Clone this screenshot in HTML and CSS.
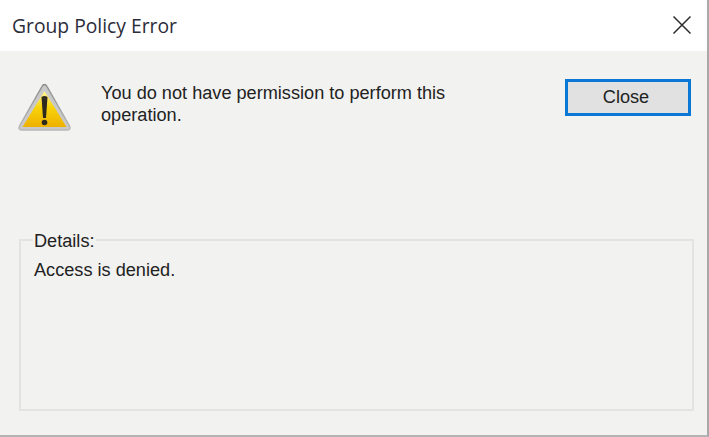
FILE: index.html
```html
<!DOCTYPE html>
<html lang="en">
<head>
<meta charset="utf-8">
<title>Group Policy Error</title>
<link rel="stylesheet" href="styles.css">
</head>
<body>
<div class="dialog">
  <header class="titlebar">
    <span class="title">Group Policy Error</span>
    <svg class="close-x" width="20" height="20" viewBox="0 0 20 20"><path d="M1.5 1.5 L18.5 18.5 M18.5 1.5 L1.5 18.5" stroke="#2b2b2b" stroke-width="1.5" fill="none"/></svg>
  </header>
  <main class="content">
    <section class="message-row">
      <svg class="warn" width="56" height="50" viewBox="0 0 56 50">
        <defs>
          <linearGradient id="y" x1="0" y1="0" x2="0" y2="1">
            <stop offset="0" stop-color="#fff3a0"/>
            <stop offset="0.45" stop-color="#f8d40a"/>
            <stop offset="1" stop-color="#eeb000"/>
          </linearGradient>
          <linearGradient id="r" x1="0" y1="0" x2="0" y2="1">
            <stop offset="0" stop-color="#8d8d8d"/>
            <stop offset="1" stop-color="#b8b8b8"/>
          </linearGradient>
        </defs>
        <path d="M27.5 1.5 Q29 1.5 30 3.5 L52.5 43 Q54 47 50.5 47 L4.5 47 Q1 47 2.5 43 L25 3.5 Q26 1.5 27.5 1.5Z" fill="#c9c9c9" stroke="url(#r)" stroke-width="1.5"/>
        <path d="M27.5 8 L49.5 44 L5.5 44 Z" fill="url(#y)"/>
        <path d="M24.5 14 Q27.5 12 30.5 14 L29 35 L26 35 Z" fill="#2e2a20"/>
        <circle cx="27.5" cy="39.5" r="2.8" fill="#2e2a20"/>
      </svg>
      <p class="message">You do not have permission to perform this operation.</p>
      <button class="close-btn" type="button">Close</button>
    </section>
    <fieldset class="details">
      <legend class="details-label">Details:</legend>
      <p class="details-text">Access is denied.</p>
    </fieldset>
  </main>
</div>
</body>
</html>
```

FILE: styles.css
```css
* { box-sizing: border-box; }
html, body { margin: 0; height: 100%; }
body { overflow: hidden; background: #f2f2f1; }
.dialog {
  width: 709px;
  height: 437px;
  display: flex;
  flex-direction: column;
  border-right: 2px solid #a9a9a9;
  border-bottom: 2px solid #b4b4b4;
  font-family: "Liberation Sans", Arial, sans-serif;
  font-size: 18.15px;
  color: #222;
}
.titlebar {
  height: 51px;
  flex: none;
  background: #fff;
  display: flex;
  align-items: center;
  justify-content: space-between;
  padding: 0 15px 0 12px;
}
.title {
  font-family: "Open Sans", "Noto Sans", sans-serif;
  font-size: 19.3px;
  color: #2c2c3a;
}
.close-x { display: block; margin-bottom: 2px; }
.content {
  flex: 1;
  display: flex;
  flex-direction: column;
  padding: 0 14px 0 19px;
  background: #f2f2f1;
}
.message-row {
  display: flex;
  align-items: flex-start;
  height: 178px;
  padding: 28px 2px 0 0;
}
.warn { flex: none; margin: 4px 28px 0 -2px; filter: blur(0.4px); }
.message {
  margin: 3px 0 0;
  width: 370px;
  line-height: 22px;
}
.close-btn {
  margin-left: auto;
  width: 126px;
  height: 37px;
  border: 3px solid #0a78d4;
  background: #e1e1e1;
  font: inherit;
  color: #222;
  padding: 0 4px 0 0;
}
.details {
  margin: 0;
  padding: 0 0 0 13px;
  width: 675px;
  height: 182px;
  border: 2px solid #e3e3e3;
  min-width: 0;
}
.details-label {
  padding: 2px 1px 0;
  margin-left: -1px;
  line-height: 20px;
}
.details-text { margin: 9px 0 0; line-height: 20px; }
```
